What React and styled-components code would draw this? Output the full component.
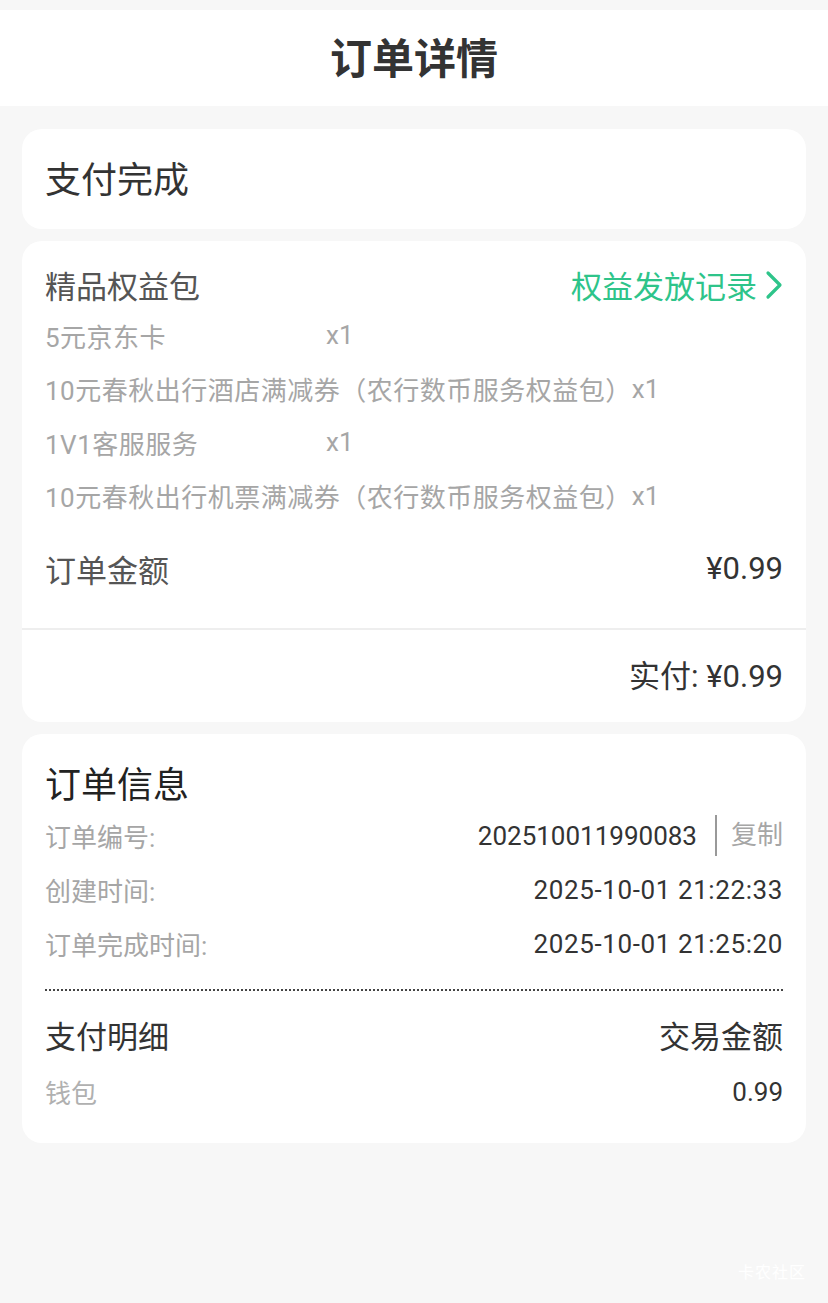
import styled, { createGlobalStyle } from 'styled-components'

const GlobalStyle = createGlobalStyle`
  html, body {
    margin: 0;
    padding: 0;
    background: #f7f7f7;
  }
  body {
    font-family: Roboto, "Noto Sans CJK SC", sans-serif;
  }
`

const Page = styled.div`
  position: relative;
  min-height: 1303px;
  padding-top: 10px;
  box-sizing: border-box;
  background: #f7f7f7;
`

const Header = styled.header`
  height: 96px;
  box-sizing: border-box;
  padding-top: 4px;
  background: #fff;
  display: flex;
  align-items: center;
  justify-content: center;
`

const Title = styled.h1`
  margin: 0;
  font-size: 42px;
  font-weight: 700;
  color: #333;
  line-height: 1;
`

const Cards = styled.main`
  display: flex;
  flex-direction: column;
  gap: 12px;
  padding: 23px 22px 0;
`

const Card = styled.section`
  background: #fff;
  border-radius: 20px;
  padding: ${(p) => p.$pad || '0 23px'};
`

const StatusCard = styled(Card)`
  height: 100px;
  display: flex;
  align-items: center;
  padding-bottom: 4px;
  box-sizing: border-box;
  font-size: 36px;
  color: #333;
`

const Row = styled.div`
  display: flex;
  align-items: center;
  justify-content: space-between;
  box-sizing: border-box;
  height: ${(p) => p.$h || 54}px;
  padding-bottom: 5px;
  margin-top: ${(p) => p.$mt || 0}px;
`

const SectionHead = styled.span`
  font-size: ${(p) => p.$size || 31}px;
  color: ${(p) => p.$color || '#555'};
`

const LinkText = styled.a`
  display: flex;
  align-items: center;
  gap: 8px;
  font-size: 31px;
  color: #2ec48a;
  text-decoration: none;
`

const Item = styled.div`
  display: flex;
  height: 53.5px;
  box-sizing: border-box;
  padding-bottom: 5px;
  align-items: center;
  font-size: 26px;
  color: #a6a6a6;
`

const ItemName = styled.span`
  min-width: 281px;
  letter-spacing: 0.5px;
`

const Amount = styled.span`
  font-size: 31px;
  color: #333;
`

const Divider = styled.div`
  height: 2px;
  background: #eeeeee;
  margin-top: 33px;
`

const PayRow = styled.div`
  display: flex;
  justify-content: flex-end;
  align-items: center;
  height: 48px;
  padding: 19px 23px 25px;
  font-size: 31px;
  color: #333;
`

const Label = styled.span`
  font-size: 26px;
  color: ${(p) => p.$color || '#a6a6a6'};
`

const Value = styled.span`
  display: flex;
  align-items: center;
  font-size: 26px;
  letter-spacing: ${(p) => (p.$wide ? '0.6px' : '0')};
  color: #333;
`

const CopyBtn = styled.span`
  margin-left: 18px;
  padding-left: 14px;
  border-left: 2px solid #999;
  line-height: 41px;
  color: #a6a6a6;
`

const Dotted = styled.div`
  border-top: 2px dotted #444;
  margin: 16px 0 0;
`

const Watermark = styled.div`
  position: absolute;
  right: 22px;
  bottom: 20px;
  font-size: 16px;
  color: #fff;
  letter-spacing: 1px;
`

const Chevron = () => (
  <svg width="18" height="30" viewBox="0 0 18 30" fill="none">
    <path d="M3 3 L15 15 L3 27" stroke="#2ec48a" strokeWidth="3.2" strokeLinecap="round" strokeLinejoin="round" />
  </svg>
)

const items = [
  { name: '5元京东卡', count: 'x1' },
  { name: '10元春秋出行酒店满减券（农行数币服务权益包）', count: 'x1' },
  { name: '1V1客服服务', count: 'x1' },
  { name: '10元春秋出行机票满减券（农行数币服务权益包）', count: 'x1' },
]

const info = [
  { label: '订单编号:', value: '202510011990083', copy: true },
  { label: '创建时间:', value: '2025-10-01 21:22:33', wide: true },
  { label: '订单完成时间:', value: '2025-10-01 21:25:20', wide: true },
]

export default function App() {
  return (
    <>
      <GlobalStyle />
      <Page>
        <Header>
          <Title>订单详情</Title>
        </Header>
        <Cards>
          <StatusCard>支付完成</StatusCard>

          <Card $pad="0">
            <div style={{ padding: '22px 23px 0' }}>
              <Row $h={48}>
                <SectionHead>精品权益包</SectionHead>
                <LinkText href="#">
                  权益发放记录
                  <Chevron />
                </LinkText>
              </Row>
              {items.map((item, index) => (
                <Item key={`Item-${index}`}>
                  <ItemName>{item.name}</ItemName>
                  {item.count}
                </Item>
              ))}
              <Row $h={48} $mt={22}>
                <SectionHead>订单金额</SectionHead>
                <Amount>¥0.99</Amount>
              </Row>
            </div>
            <Divider />
            <PayRow>实付: ¥0.99</PayRow>
          </Card>

          <Card $pad="23px 23px 22px">
            <Row>
              <SectionHead $size={36} $color="#222">订单信息</SectionHead>
            </Row>
            {info.map((row, index) => (
              <Row key={`Info-${index}`}>
                <Label>{row.label}</Label>
                <Value $wide={row.wide}>
                  {row.value}
                  {row.copy && <CopyBtn>复制</CopyBtn>}
                </Value>
              </Row>
            ))}
            <Dotted />
            <Row $h={56} $mt={18}>
              <SectionHead $color="#333">支付明细</SectionHead>
              <SectionHead $color="#333">交易金额</SectionHead>
            </Row>
            <Row $mt={2}>
              <Label $color="#b0b0b0">钱包</Label>
              <Value>0.99</Value>
            </Row>
          </Card>
        </Cards>
        <Watermark>卡农社区</Watermark>
      </Page>
    </>
  )
}
